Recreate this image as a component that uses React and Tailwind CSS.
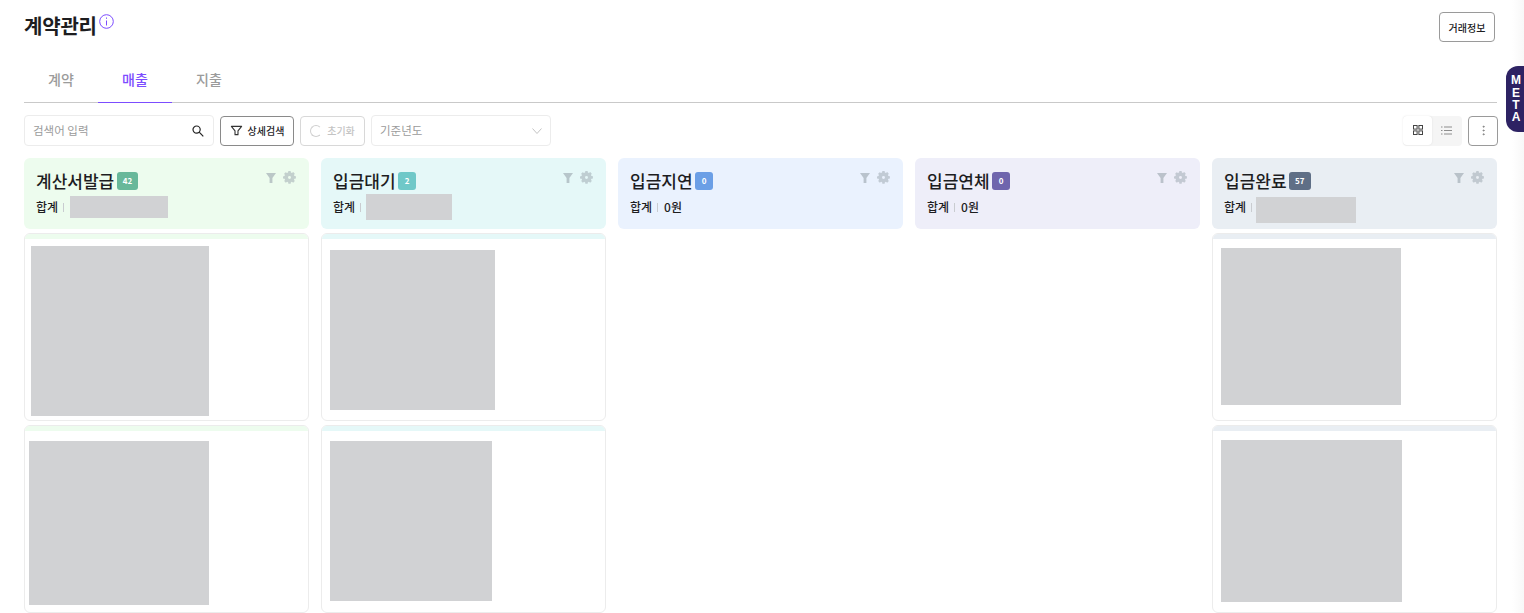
import React from "react";
import { MoreVertical } from "lucide-react";

const columns = [
  {
    title: "계산서발급", count: "42", head: "bg-[#edfcee]", badge: "bg-[#68b89a]",
    blockClass: "w-[98px] h-[22px] mt-[-1px]",
    cards: [
      { box: "ml-[6px] mt-[7px] w-[178px] h-[170px]" },
      { box: "ml-[4px] mt-[10px] w-[180px] h-[164px]" },
    ],
  },
  {
    title: "입금대기", count: "2", head: "bg-[#e5f8f8]", badge: "bg-[#6fc8c8]",
    blockClass: "w-[86px] h-[26px] mt-[-1px] ml-[-1px]",
    cards: [
      { box: "ml-[8px] mt-[11px] w-[165px] h-[160px]" },
      { box: "ml-[8px] mt-[10px] w-[162px] h-[160px]" },
    ],
  },
  { title: "입금지연", count: "0", head: "bg-[#eaf2fe]", badge: "bg-[#6b9fe6]", total: "0원", cards: [] },
  { title: "입금연체", count: "0", head: "bg-[#eeeef9]", badge: "bg-[#6f65ad]", total: "0원", cards: [] },
  {
    title: "입금완료", count: "57", head: "bg-[#e9eef3]", badge: "bg-[#5f6f86]",
    blockClass: "w-[100px] h-[26px] mt-[5px] ml-[-2px]",
    cards: [
      { box: "ml-[8px] mt-[9px] w-[180px] h-[157px]" },
      { box: "ml-[8px] mt-[9px] w-[181px] h-[162px]" },
    ],
  },
];

const FilterOutline = ({ className }) => (
  <svg viewBox="0 0 14 14" fill="none" stroke="currentColor" strokeWidth="1.2" strokeLinejoin="round" className={className}>
    <path d="M1.5 2.5h11L8.6 7.4v4.1H5.4V7.4z" />
  </svg>
);

const FilterSolid = () => (
  <svg viewBox="0 0 12 12" className="w-[12px] h-[12px] fill-[#9aa5ae] opacity-60">
    <path d="M1 1h10L7.4 6v5H4.6V6z" />
  </svg>
);

const GearSolid = () => (
  <svg viewBox="0 0 14 14" className="w-[13px] h-[13px] opacity-50">
    <path
      fill="#9aa5ae"
      fillRule="evenodd"
      d="M5.8 0h2.400l.3 1.600 1.100.5 1.400-.9 1.700 1.700-.9 1.400.5 1.100 1.600.3v2.400l-1.600.3-.5 1.100.9 1.400-1.700 1.700-1.400-.9-1.100.5-.3 1.600H5.800l-.3-1.600-1.100-.5-1.400.9-1.700-1.700.9-1.400-.5-1.100L0 8.200V5.800l1.600-.3.5-1.100-.9-1.400 1.700-1.700 1.400.9 1.100-.5zM7 5.400a1.600 1.600 0 1 0 0 3.200 1.600 1.600 0 0 0 0-3.200z"
    />
  </svg>
);

const ColumnHeader = ({ col }) => (
  <div className={`${col.head} h-[71px] rounded-[6px] pl-[12px] pr-[13px] pt-[10px]`}>
    <div className="flex items-start justify-between">
      <div className="flex items-center gap-[2.5px] h-[24px] mt-[1px]">
        <span className="text-[17px] leading-[24px] font-medium text-[#1d1d1f]">{col.title}</span>
        <span className={`${col.badge} h-[18px] min-w-[18px] px-[6px] rounded-[3px] flex items-center justify-center text-[8px] font-bold text-white`}>
          {col.count}
        </span>
      </div>
      <div className="flex items-center gap-[6px] mt-[3px]">
        <FilterSolid />
        <GearSolid />
      </div>
    </div>
    <div className="flex items-center h-[18px] mt-[5px] text-[12px] font-medium text-[#1d1d1f]">
      <span>합계</span>
      <span className="w-px h-[9px] bg-[#c9ccd0] ml-[5px] mr-[6px]" />
      {col.total ? <span>{col.total}</span> : <div className={`${col.blockClass} bg-[#d1d2d4]`} />}
    </div>
  </div>
);

const Card = ({ card, head }) => (
  <div className="h-[188px] rounded-[6px] border border-[#ececec] bg-white overflow-hidden">
    <div className={`${head} h-[5px]`} />
    <div className={`${card.box} bg-[#d1d2d4]`} />
  </div>
);

export default function App() {
  return (
    <div className="relative w-[1524px] h-[613px] overflow-hidden bg-white font-['Noto_Sans_CJK_KR','Noto_Sans',sans-serif]">
      <div className="w-[1497px] pl-[24px]">
        <div className="flex justify-between pt-[12px] h-[56px]">
          <div className="flex items-start">
            <h1 className="text-[20px] leading-[28px] font-bold tracking-[-0.2px] text-[#1d1d1f]">계약관리</h1>
            <svg viewBox="0 0 15 15" className="w-[15px] h-[15px] mt-[1.5px] ml-[2px]" fill="none" stroke="#7c4dff" strokeWidth="1">
              <circle cx="7.500" cy="7.500" r="6.800" />
              <path d="M7.500 6.500V11.500M7.500 3.500v1.300" />
            </svg>
          </div>
          <button className="mr-[2px] w-[56px] h-[30px] rounded-[4px] border border-[#9a9a9a] text-[10px] font-medium text-[#1d1d1f]">거래정보</button>
        </div>

        <div className="flex h-[47px] border-b border-[#c9c9c9]">
          <div className="w-[74px] flex items-center justify-center text-[14px] text-[#9b9b9b] font-medium pt-[1px]">계약</div>
          <div className="w-[74px] h-[47px] flex items-center justify-center text-[14px] text-[#7c4dff] font-medium pt-[1px] border-b border-[#7c4dff]">매출</div>
          <div className="w-[74px] flex items-center justify-center text-[14px] text-[#9b9b9b] font-medium pt-[1px]">지출</div>
        </div>

        <div className="flex justify-between items-center mt-[12px] h-[31px]">
          <div className="flex items-center">
            <div className="w-[190px] h-[31px] rounded-[4px] border border-[#ececec] flex items-center justify-between pl-[8px] pr-[9px]">
              <span className="text-[11.5px] text-[#9b9b9b]">검색어 입력</span>
              <svg viewBox="0 0 12 12" className="w-[12px] h-[12px]" fill="none" stroke="#222" strokeWidth="1.200">
                <circle cx="4.600" cy="4.600" r="3.600" />
                <path d="M7.200 7.200L11.300 11.300" />
              </svg>
            </div>
            <button className="ml-[6px] w-[74px] h-[30px] rounded-[4px] border border-[#8a8a8a] flex items-center justify-center gap-[5px] text-[10px] font-medium text-[#1d1d1f]">
              <FilterOutline className="w-[13px] h-[13px] text-[#333]" />
              상세검색
            </button>
            <button className="ml-[6px] w-[65px] h-[30px] rounded-[4px] border border-[#d8d8d8] flex items-center justify-center gap-[5px] text-[10px] font-medium text-[#c4c4c4]">
              <span className="w-[12px] h-[12px] rounded-full border border-[#d0d0d0] border-r-transparent" />
              초기화
            </button>
            <div className="ml-[6px] w-[180px] h-[31px] rounded-[4px] border border-[#ececec] flex items-center justify-between pl-[8px] pr-[8px]">
              <span className="text-[11.5px] text-[#9b9b9b]">기준년도</span>
              <svg viewBox="0 0 10 6" className="w-[10px] h-[6px]" fill="none" stroke="#c4c4c4" strokeWidth="1">
                <path d="M0.500 0.500L5 5.500L9.500 0.500" />
              </svg>
            </div>
          </div>
          <div className="flex items-center mr-[-1px]">
            <div className="flex w-[59px] h-[30px] rounded-[4px] bg-[#f5f5f5]">
              <div className="w-[29px] h-[29px] rounded-[4px] bg-white shadow-[0_0_2px_rgba(0,0,0,0.1)] flex items-center justify-center">
                <svg viewBox="0 0 10 10" className="w-[10px] h-[10px]" fill="none" stroke="#444" strokeWidth="1">
                  <rect x="0.5" y="0.5" width="3.6" height="3.6" />
                  <rect x="5.9" y="0.5" width="3.6" height="3.6" />
                  <rect x="0.5" y="5.9" width="3.6" height="3.6" />
                  <rect x="5.9" y="5.9" width="3.6" height="3.6" />
                </svg>
              </div>
              <div className="flex-1 flex items-center justify-center pr-[2px]">
                <svg viewBox="0 0 11 9" className="w-[11px] h-[9px]" fill="none" stroke="#8d8d8d" strokeWidth="1">
                  <path d="M0 1h1.5M3 1h8M0 4.500h1.500M3 4.500h8M0 8h1.500M3 8h8" />
                </svg>
              </div>
            </div>
            <button className="ml-[6px] w-[30px] h-[30px] rounded-[4px] border border-[#9a9a9a] flex items-center justify-center">
              <MoreVertical className="w-[13px] h-[13px] text-[#777]" strokeWidth={1.5} />
            </button>
          </div>
        </div>

        <div className="grid grid-cols-5 gap-x-[12px] mt-[12px]">
          {columns.map((col) => (
            <div key={col.title} className="flex flex-col">
              <ColumnHeader col={col} />
              <div className="flex flex-col gap-[4px] mt-[4px]">
                {col.cards.map((card, i) => (
                  <Card key={i} card={card} head={col.head} />
                ))}
              </div>
            </div>
          ))}
        </div>
      </div>

      <div className="absolute right-0 top-0 w-[12px] h-full bg-gradient-to-r from-white to-[#f8f8f8]" />
      <div className="absolute right-0 top-[66px] w-[18px] h-[66px] rounded-l-[12px] bg-[#2d2263] pl-[2px] flex flex-col items-center justify-center text-[12px] leading-[12.3px] font-bold text-white font-['Liberation_Sans',sans-serif]">
        <span>M</span>
        <span>E</span>
        <span>T</span>
        <span>A</span>
      </div>
    </div>
  );
}
